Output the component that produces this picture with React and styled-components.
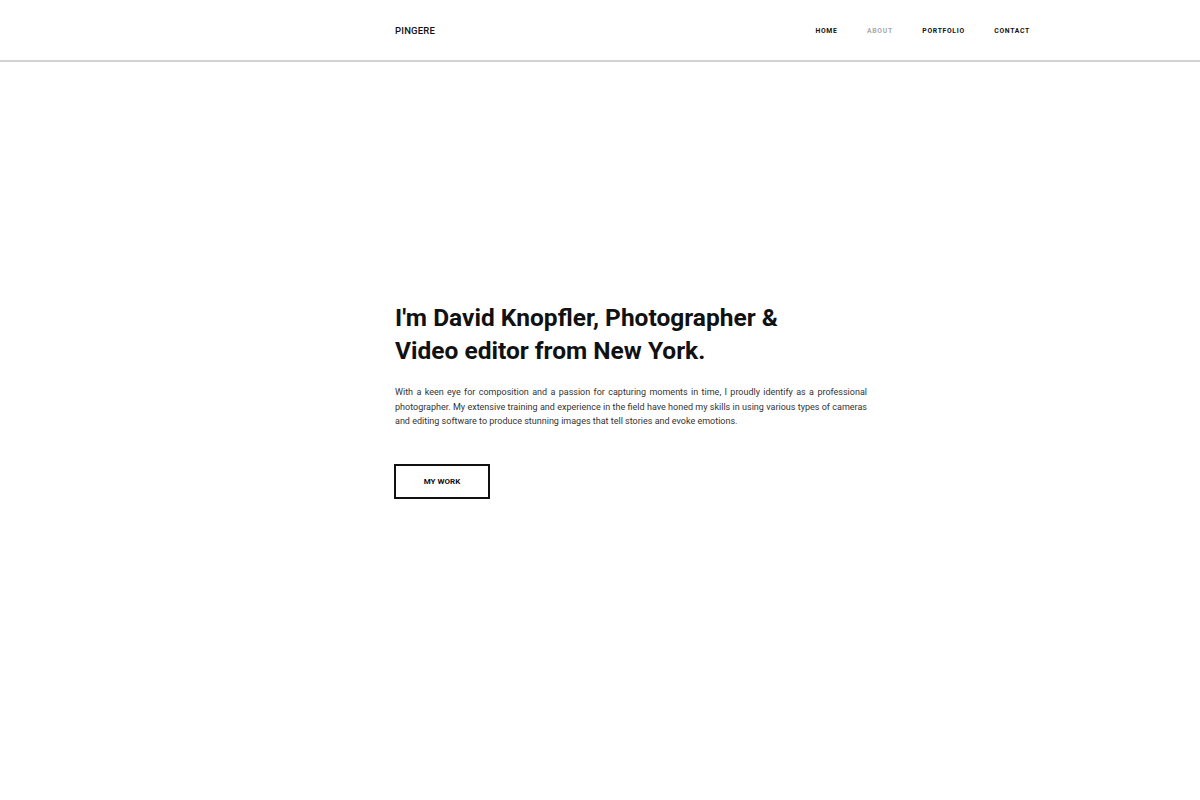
import styled, { createGlobalStyle } from "styled-components";

const GlobalStyle = createGlobalStyle`
  html, body {
    margin: 0;
    padding: 0;
    background: #fff;
    font-family: Roboto, "Liberation Sans", sans-serif;
    color: #111;
  }
`;

const links = [
  { label: "HOME" },
  { label: "ABOUT", active: true },
  { label: "PORTFOLIO" },
  { label: "CONTACT" },
];

const App = () => {
  return (
    <Page>
      <GlobalStyle />
      <Header>
        <HeaderInner>
          <Logo href="#">PINGERE</Logo>
          <Nav>
            {links.map((link) => (
              <NavLink key={link.label} href="#" $active={link.active}>
                {link.label}
              </NavLink>
            ))}
          </Nav>
        </HeaderInner>
      </Header>

      {/* Intro */}
      <Hero>
        <HeroInner>
          <Title>
            I'm David Knopfler, Photographer &amp;
            <br />
            Video editor from New York.
          </Title>
          <Intro>
            With a keen eye for composition and a passion for capturing moments
            in time, I proudly identify as a professional photographer. My
            extensive training and experience in the field have honed my skills
            in using various types of cameras and editing software to produce
            stunning images that tell stories and evoke emotions.
          </Intro>
          <Button href="#">MY WORK</Button>
        </HeroInner>
      </Hero>
    </Page>
  );
};

const Page = styled.div`
  min-height: 800px;
  display: flex;
  flex-direction: column;
`;

const Header = styled.header`
  height: 60px;
  border-bottom: 2px solid #d2d2d2;
  box-sizing: content-box;
`;

const HeaderInner = styled.div`
  height: 100%;
  margin-left: 395px;
  width: 635px;
  padding-top: 1px;
  box-sizing: border-box;
  display: flex;
  align-items: center;
  justify-content: space-between;
`;

const Logo = styled.a`
  font-size: 9.5px;
  font-weight: 500;
  letter-spacing: 0.2px;
  color: #111;
  text-decoration: none;
`;

const Nav = styled.nav`
  display: flex;
  align-items: center;
  gap: 29.5px;
`;

const NavLink = styled.a`
  font-size: 6.8px;
  font-weight: 700;
  letter-spacing: 0.7px;
  text-decoration: none;
  color: ${({ $active }) => ($active ? "#aaa" : "#111")};
`;

const Hero = styled.main`
  flex: 1;
  padding-top: 239px;
`;

const HeroInner = styled.div`
  margin-left: 395px;
  width: 472px;
`;

const Title = styled.h1`
  margin: 0;
  font-size: 24.5px;
  line-height: 33px;
  font-weight: 700;
  color: #111;
`;

const Intro = styled.p`
  margin: 18px 0 0;
  font-size: 9px;
  line-height: 14.5px;
  color: #333;
  text-align: justify;
`;

const Button = styled.a`
  margin-top: 35px;
  margin-left: -1px;
  display: flex;
  align-items: center;
  justify-content: center;
  width: 96px;
  height: 35px;
  box-sizing: border-box;
  border: 2px solid #111;
  font-size: 8px;
  font-weight: 700;
  color: #111;
  text-decoration: none;
`;

export default App;
